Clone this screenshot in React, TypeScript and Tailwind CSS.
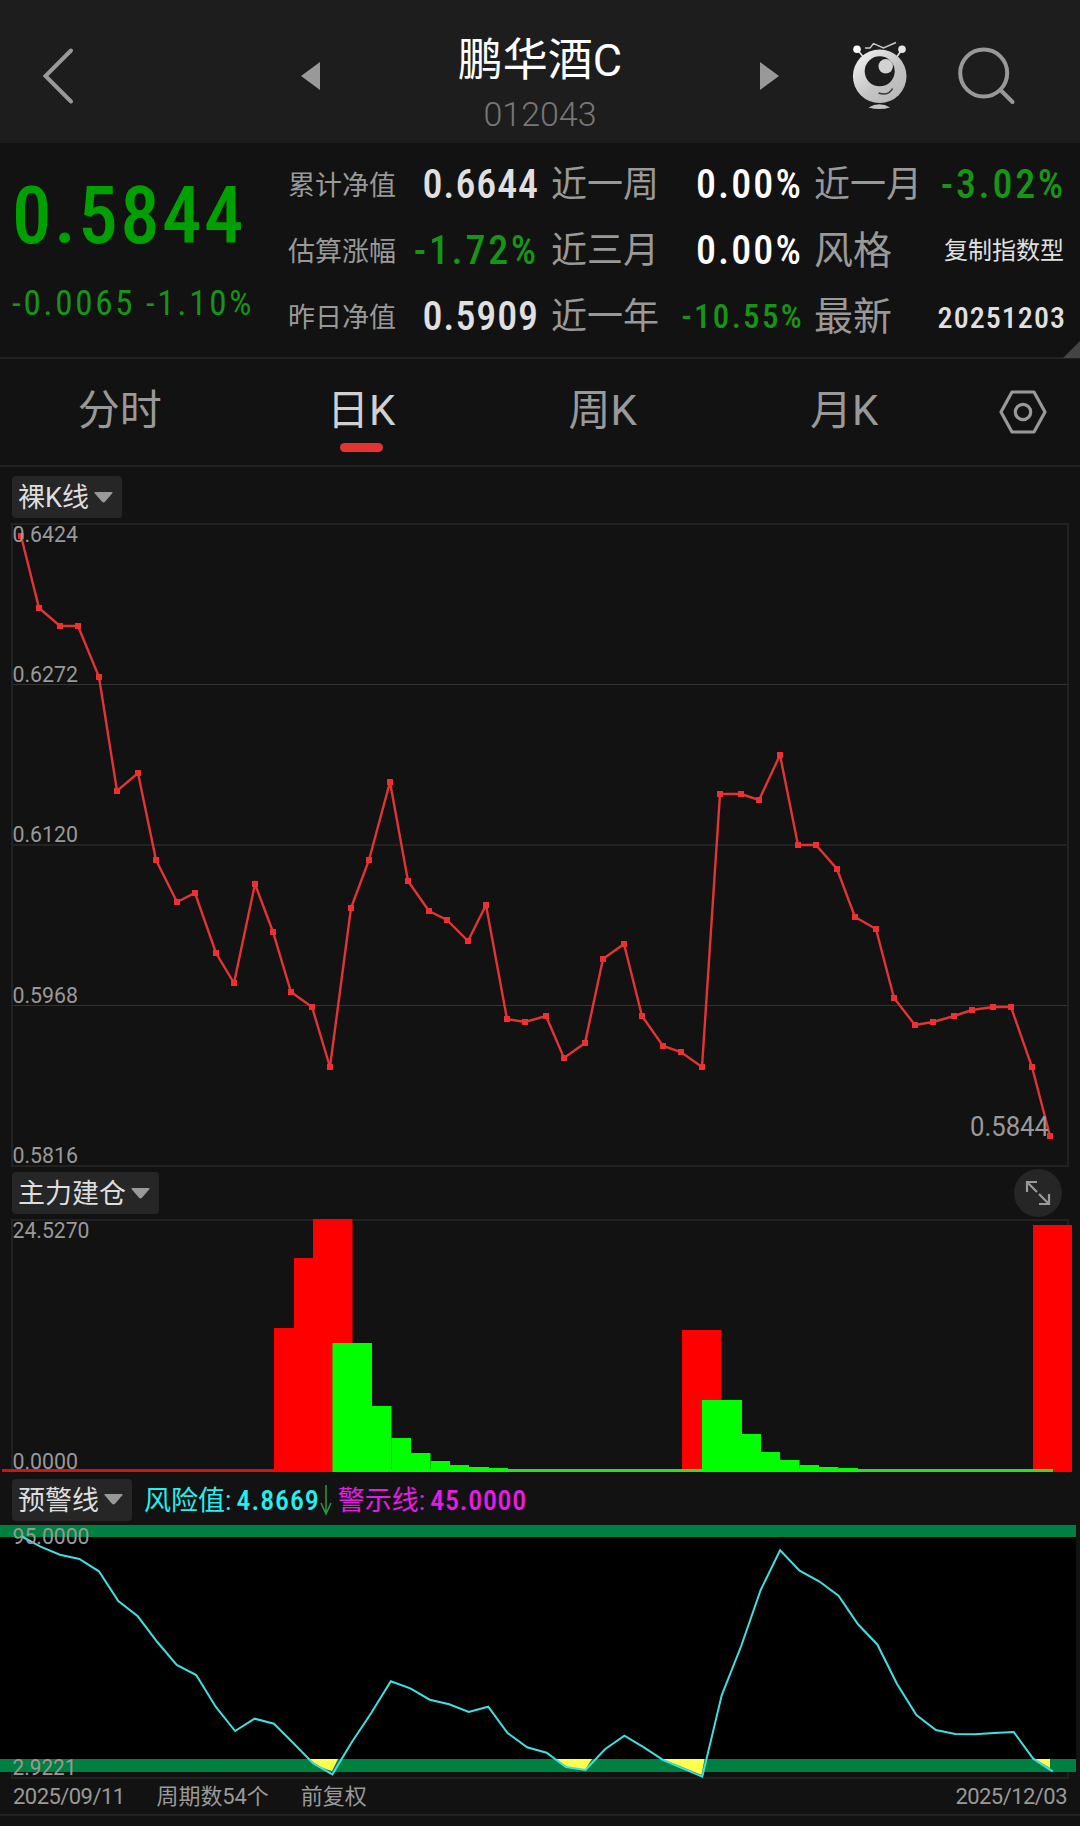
import type { ReactNode } from 'react';

const priceY = [
  536, 608, 626, 626, 677, 791, 773, 860, 902, 893, 953, 983, 884, 932, 992, 1007, 1067, 908,
  860, 782, 881, 911, 920, 941, 905, 1019, 1022, 1016, 1058, 1043, 959, 944, 1016, 1046, 1052, 1067,
  794, 794, 800, 755, 845, 845, 869, 917, 929, 998, 1025, 1022, 1016, 1010, 1007, 1007, 1067, 1136,
];

const riskY = [
  1536, 1546.7, 1554.7, 1559, 1571.3, 1601, 1616.3, 1642, 1665, 1675, 1706.7, 1731, 1718.7, 1723.7,
  1743.3, 1763.3, 1774.3, 1742, 1712.7, 1681.3, 1688.3, 1699.7, 1704.3, 1712, 1706.7, 1733, 1747.3,
  1752.7, 1767, 1770, 1749.3, 1735.7, 1747.3, 1760, 1768.3, 1776.7, 1695.3, 1646, 1590, 1550.3,
  1570.7, 1581.3, 1595.7, 1624.3, 1644.7, 1683.7, 1715, 1730, 1734, 1734.3, 1733, 1732, 1758.7, 1771.3,
];

// [left, right, top]
const redBars = [
  [274, 294, 1328],
  [294, 313, 1258],
  [313, 352.5, 1219],
  [682, 721.5, 1330],
  [1033, 1072, 1225],
];

const greenBars = [
  [332.5, 372, 1343],
  [372, 391.5, 1406],
  [391.5, 411, 1438],
  [411, 430.5, 1453],
  [430.5, 450, 1461],
  [450, 469, 1465],
  [469, 489, 1467],
  [489, 508, 1468],
  [702, 742, 1400],
  [742, 761, 1434],
  [761, 780, 1452],
  [780, 799.5, 1460],
  [799.5, 819, 1465],
  [819, 838.5, 1467],
  [838.5, 858, 1468],
];

const pricePoints = priceY.map((y, i) => ({ x: Math.floor((21.82 + i * 19.441) / 3) * 3, y }));
const riskPoints = riskY.map((y, i) => `${(21 + i * 19.465).toFixed(1)},${y}`).join(' ');

const stats = [
  [
    { label: '累计净值', value: '0.6644', color: 'text-[#e0e0e0]' },
    { label: '近一周', value: '0.00%', color: 'text-white' },
    { label: '近一月', value: '-3.02%', color: 'text-[#169516]' },
  ],
  [
    { label: '估算涨幅', value: '-1.72%', color: 'text-[#169516]' },
    { label: '近三月', value: '0.00%', color: 'text-white' },
    { label: '风格', value: '复制指数型', color: 'text-[#e0e0e0]' },
  ],
  [
    { label: '昨日净值', value: '0.5909', color: 'text-[#e0e0e0]' },
    { label: '近一年', value: '-10.55%', color: 'text-[#169516]' },
    { label: '最新', value: '20251203', color: 'text-[#e0e0e0]' },
  ],
];

const tabs = ['分时', '日K', '周K', '月K'];

function valueSize(value: string) {
  if (value === '复制指数型') return 'text-[24px]';
  if (value === '-10.55%') return '-mr-[4px] text-[33px] font-medium [font-stretch:75%] tracking-[2.300px]';
  if (value === '20251203') return '-mr-[2px] text-[30px] font-medium [font-stretch:75%] tracking-[1.050px]';
  if (value === '0.00%') return '-mr-[3px] text-[40px] font-medium [font-stretch:75%] tracking-[2.100px]';
  if (value.endsWith('%')) return '-mr-[2px] text-[40px] font-medium [font-stretch:75%] tracking-[2.700px]';
  return '-mr-[2px] text-[40px] font-medium [font-stretch:75%] tracking-[0.900px]';
}

function Chip({ children }: { children: ReactNode }) {
  return (
    <div className="flex h-[42px] items-center gap-[5px] rounded-[4px] bg-[#262626] pr-[9px] pl-[6px] text-[27px] text-[#dedede]">
      <span className="pt-[3px]">{children}</span>
      <svg width="19" height="11" viewBox="0 0 19 11" fill="#999">
        <path d="M1.5 0h16q2 0 .6 1.6L11 9.8q-1.5 1.4-3 0L.9 1.6Q-.5 0 1.5 0Z" />
      </svg>
    </div>
  );
}

function AxisLabel({ y, width, children }: { y: number; width: number; children: string }) {
  return (
    <text x="12.5" y={y + 7.5} textLength={width} lengthAdjust="spacingAndGlyphs" fontSize="22.5" fill="#999">
      {children}
    </text>
  );
}

function Mascot() {
  return (
    <svg className="ml-[71px]" width="60" height="70" viewBox="850 41 60 70">
      <defs>
        <linearGradient id="body" x1="0" y1="0" x2="1" y2="1">
          <stop offset="0" stopColor="#f8f8f8" />
          <stop offset="0.55" stopColor="#c4c4c4" />
          <stop offset="1" stopColor="#b4b4b4" />
        </linearGradient>
      </defs>
      <path d="M858 50.5l5 6M901 51l-4 5.500" stroke="#e0e0e0" strokeWidth="1.600" />
      <circle cx="857" cy="49.300" r="3.800" fill="#fff" />
      <circle cx="902" cy="49.300" r="3.800" fill="#e6e6e6" />
      <path d="M865 48h5l3.500-4.300L883.500 48 896 42.500" fill="none" stroke="#c8c8c8" strokeWidth="1.400" />
      <circle cx="879.700" cy="76.300" r="26.800" fill="url(#body)" />
      <circle cx="879.700" cy="71.300" r="15" fill="#1d1d1d" />
      <circle cx="885.700" cy="66.300" r="7.200" fill="#d2d2d2" />
      <path d="M878.500 93q10 3.500 14-4.500" fill="none" stroke="#333" strokeWidth="1.500" />
      <path d="M868.500 107.500q11-6.500 21.500 0-10.500 3-21.500 0Z" fill="#c4c4c4" />
    </svg>
  );
}

function Header() {
  return (
    <header className="flex h-[143px] items-center bg-[#1d1d1d] pt-2">
      <div className="w-[301px] pl-[42px]">
        <svg width="33" height="58" viewBox="0 0 33 58" fill="none" stroke="#999" strokeWidth="4" strokeLinecap="round">
          <path d="M29 3.500 3.500 29 29 54.500" />
        </svg>
      </div>
      <svg width="19" height="28" viewBox="0 0 19 28" fill="#999">
        <path d="M19 0v28L0 14Z" />
      </svg>
      <div className="flex w-[440px] flex-col items-center pt-[16px]">
        <h1 className="text-[45px] leading-[56px] text-white">鹏华酒C</h1>
        <p className="mt-[5px] text-[34px] leading-[40px] font-light text-[#777]">012043</p>
      </div>
      <svg width="19" height="28" viewBox="0 0 19 28" fill="#999">
        <path d="M0 0v28l19-14Z" />
      </svg>
      <Mascot />
      <svg className="ml-[48px]" width="58" height="58" viewBox="0 0 58 58" fill="none" stroke="#999" strokeWidth="4" strokeLinecap="round">
        <circle cx="25.700" cy="26" r="23.500" />
        <path d="M43 43.500 54.500 55" />
      </svg>
    </header>
  );
}

function Summary() {
  return (
    <section className="relative flex h-[216px] border-b-2 border-[#222] pt-[8px]">
      <div className="w-[288px] pl-[12px] text-[#00a000]">
        <div className="pt-[20px] text-[79px] leading-[90px] font-medium tracking-[2.400px] [font-stretch:75%]">0.5844</div>
        <div className="mt-[22px] text-[35px] leading-[42px] tracking-[2.700px] whitespace-nowrap text-[#169516] [font-stretch:75%]">
          -0.0065 -1.10%
        </div>
      </div>
      <div className="flex-1 pt-px">
        {stats.map((row) => (
          <div key={row[0].label} className="flex h-[66px] items-center text-[#999]">
            <div className="flex w-[249px] items-center justify-between">
              <span className="pt-[2px] text-[27px]">{row[0].label}</span>
              <span className={`${row[0].color} ${valueSize(row[0].value)}`}>{row[0].value}</span>
            </div>
            <div className="ml-[14px] flex w-[249px] items-center justify-between">
              <span className="text-[36px]">{row[1].label}</span>
              <span className={`${row[1].color} ${valueSize(row[1].value)}`}>{row[1].value}</span>
            </div>
            <div className="ml-[14px] flex w-[250px] items-center justify-between">
              <span className={row[2].label.length === 2 ? 'text-[39px]' : 'text-[36px]'}>{row[2].label}</span>
              <span className={`${row[2].color} ${valueSize(row[2].value)}`}>{row[2].value}</span>
            </div>
          </div>
        ))}
      </div>
      <svg className="absolute right-0 -bottom-[1px]" width="17" height="17" viewBox="0 0 17 17">
        <path d="M17 0v17H0Z" fill="#444" />
      </svg>
    </section>
  );
}

function Tabs() {
  return (
    <nav className="flex h-[108px] items-center border-b-2 border-[#222]">
      {tabs.map((tab) => (
        <div key={tab} className="relative flex w-[241.5px] justify-center pr-[2px] pb-[3px] text-[42px]">
          <span className={tab === '日K' ? 'text-[#d0d0d0]' : 'text-[#999]'}>{tab}</span>
          {tab === '日K' && <span className="absolute bottom-[-7px] h-[9px] w-[43px] rounded-full bg-[#e53232]" />}
        </div>
      ))}
      <div className="flex flex-1 justify-center">
        <svg width="48" height="44" viewBox="0 0 48 44" fill="none" stroke="#999" strokeWidth="3.200" strokeLinejoin="round">
          <path d="M13 2h22l11 20-11 20H13L2 22Z" />
          <circle cx="24" cy="22" r="7.700" />
        </svg>
      </div>
    </nav>
  );
}

function PriceChart() {
  return (
    <svg width="1080" height="644" viewBox="0 523 1080 644" className="block overflow-visible">
      <rect x="12" y="524" width="1056" height="642" fill="none" stroke="#222" strokeWidth="2" />
      <path d="M13 684.500H1067M13 1005.500H1067" stroke="#333" />
      <path d="M13 845H1067" stroke="#222" strokeWidth="2" />
      <polyline points={pricePoints.map((p) => `${p.x},${p.y}`).join(' ')} fill="none" stroke="#e23434" strokeWidth="2.400" />
      {pricePoints.map((p) => (
        <rect key={p.x} x={p.x - 3} y={p.y - 3} width="6" height="6" fill="#f03030" />
      ))}
      <AxisLabel y={534} width={65.5}>0.6424</AxisLabel>
      <AxisLabel y={674} width={65.5}>0.6272</AxisLabel>
      <AxisLabel y={834} width={65.5}>0.6120</AxisLabel>
      <AxisLabel y={995} width={65.5}>0.5968</AxisLabel>
      <AxisLabel y={1155} width={65.5}>0.5816</AxisLabel>
      <text x="970" y="1135.500" textLength="79" lengthAdjust="spacingAndGlyphs" fontSize="27" fill="#999">
        0.5844
      </text>
    </svg>
  );
}

function PositionChart() {
  return (
    <svg width="1080" height="255" viewBox="0 1219 1080 255" className="block overflow-visible">
      <path d="M12 1473V1220H1068V1473" fill="none" stroke="#222" strokeWidth="2" />
      <AxisLabel y={1230} width={77}>24.5270</AxisLabel>
      <AxisLabel y={1461} width={65.5}>0.0000</AxisLabel>
      <path d="M2 1470.500H275" stroke="#cc1515" strokeWidth="3" />
      {redBars.map(([left, right, top]) => (
        <rect key={left} x={left} y={top} width={right - left} height={1472 - top} fill="#f00" />
      ))}
      <path d="M333 1470.500H1053" stroke="#2be02b" strokeWidth="3" />
      {greenBars.map(([left, right, top]) => (
        <rect key={left} x={left} y={top} width={right - left} height={1472 - top} fill="#0f0" />
      ))}
    </svg>
  );
}

function RiskChart() {
  return (
    <svg width="1080" height="254" viewBox="0 1525 1080 254" className="block overflow-visible">
      <path d="M12 1770V1778H1068V1770" fill="none" stroke="#222" strokeWidth="2" />
      <rect x="0" y="1537" width="1076" height="222" fill="#000" />
      <rect x="0" y="1525" width="1076" height="12" fill="#008040" />
      <rect x="0" y="1759" width="1076" height="13" fill="#008040" />
      <g fill="#ffff4d">
        <path d="M309 1759H338L332 1771Q320 1768 309 1759Z" />
        <path d="M556 1759H592L585.500 1769Q572 1770 566 1766Z" />
        <path d="M662 1759H704.500L701.500 1775 680 1766Z" />
        <path d="M1035 1759H1050V1768Z" />
      </g>
      <polyline points={riskPoints} fill="none" stroke="#40e0e0" strokeWidth="2" />
      <AxisLabel y={1536} width={77}>95.0000</AxisLabel>
      <AxisLabel y={1767.5} width={64}>2.9221</AxisLabel>
    </svg>
  );
}

export default function App() {
  return (
    <main className="flex h-[1826px] w-[1080px] flex-col overflow-hidden bg-[#121212] font-[Roboto,'Noto_Sans_CJK_SC',sans-serif]">
      <Header />
      <Summary />
      <Tabs />

      <div className="flex h-[56px] items-center pt-[4px] pl-[12px]">
        <Chip>裸K线</Chip>
      </div>
      <PriceChart />

      <div className="flex h-[52px] items-center justify-between pr-[18px] pl-[12px]">
        <Chip>主力建仓</Chip>
        <div className="flex size-[48px] items-center justify-center rounded-full bg-[#262626]">
          <svg width="26" height="26" viewBox="0 0 26 26" fill="none" stroke="#999" strokeWidth="2.200">
            <path d="M2 12V2h10M2 2l10 10M24 14v10H14M24 24 14 14" />
          </svg>
        </div>
      </div>
      <PositionChart />

      <div className="flex h-[51px] items-center pl-[12px] text-[27px]">
        <Chip>预警线</Chip>
        <span className="ml-[12px] pt-[2px] text-[#20f0f0]">
          风险值:<span className="ml-[5px] text-[28px] font-medium tracking-[0.900px] [font-stretch:75%]">4.8669</span>
        </span>
        <svg width="12" height="30" viewBox="0 0 12 30" fill="none" stroke="#2a9a40" strokeWidth="1.500">
          <path d="M6 0v29M1 18l5 11 5-11" />
        </svg>
        <span className="ml-[6px] pt-[2px] text-[#e81ae8]">
          警示线:<span className="ml-[5px] text-[28px] font-medium tracking-[0.700px] [font-stretch:75%]">45.0000</span>
        </span>
      </div>
      <RiskChart />

      <footer className="flex h-[37px] items-center border-b-2 border-[#222] pr-[13px] pl-[13px] text-[22px] text-[#999]">
        <span className="tracking-[-0.550px]">2025/09/11</span>
        <span className="ml-[32px] tracking-[-0.100px]">周期数54个</span>
        <span className="ml-[32px]">前复权</span>
        <span className="ml-auto tracking-[-0.550px]">2025/12/03</span>
      </footer>
    </main>
  );
}
